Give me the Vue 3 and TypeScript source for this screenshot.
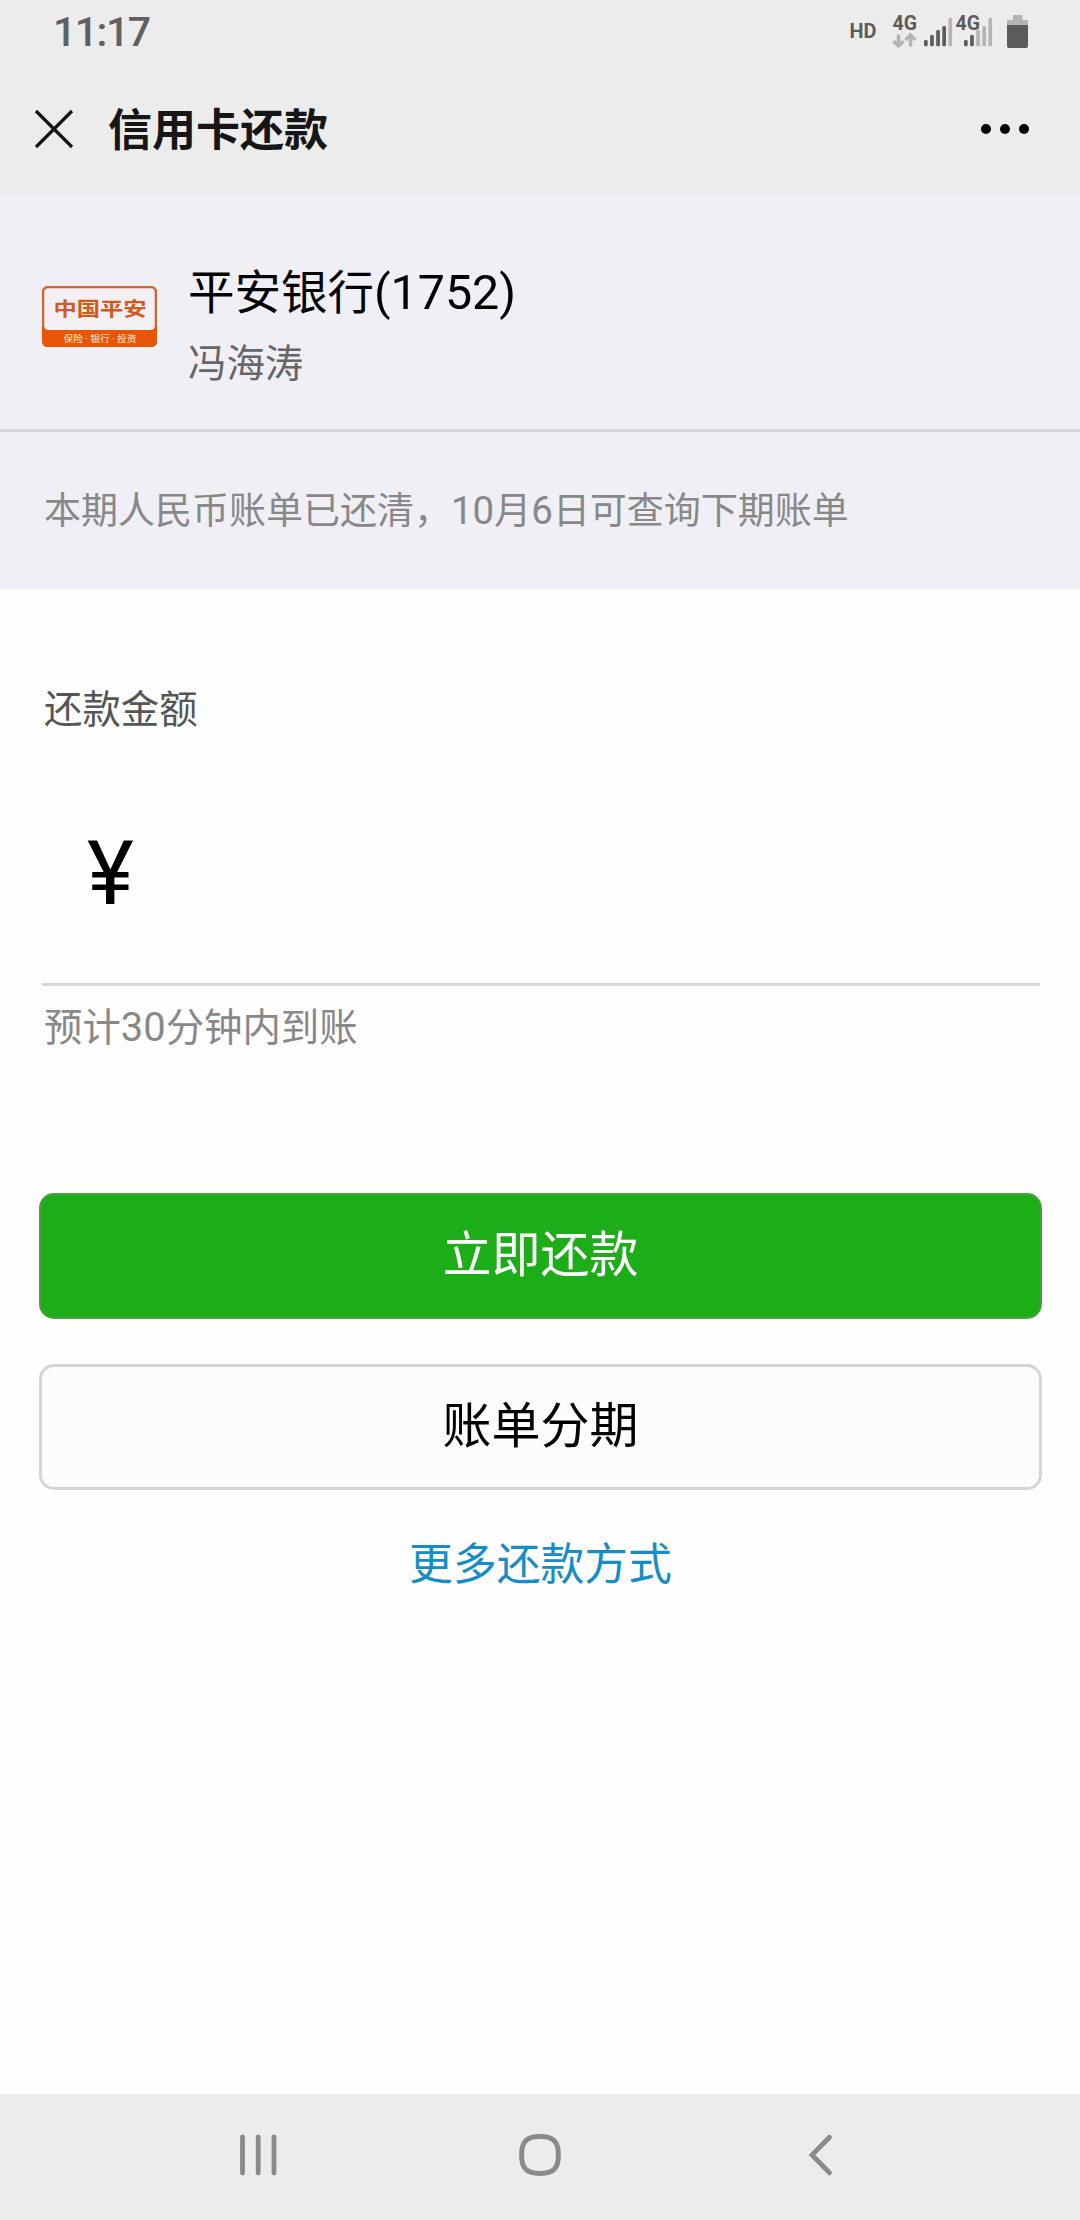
<script setup lang="ts">
interface Bar {
  x: number
  y: number
  lit: boolean
}

interface Run {
  text: string
  latin: boolean
}

const barTops = [40, 35, 30, 26, 18]

function signal(start: number, level: number): Bar[] {
  return barTops.map((y, i) => ({ x: start + i * 6.1, y, lit: i < level }))
}

const bars: Bar[] = [...signal(924, 4), ...signal(964, 2)]

// Digits are set slightly larger than the Chinese glyphs around them.
function runs(text: string): Run[] {
  return (text.match(/[\x20-\x7e]+|[^\x20-\x7e]+/g) ?? []).map((part) => ({
    text: part,
    latin: /^[\x20-\x7e]/.test(part),
  }))
}

const bank = runs('平安银行(1752)')
const notice = runs('本期人民币账单已还清，10月6日可查询下期账单')
const hint = runs('预计30分钟内到账')
</script>

<template>
  <div class="screen">
    <header class="top">
      <div class="status">
        <span class="time">11:17</span>
        <svg class="indicators" width="190" height="60" viewBox="845 0 190 60">
          <g class="tag">
            <text x="849.500" y="38.3" font-size="20.5" textLength="27" lengthAdjust="spacingAndGlyphs">HD</text>
            <text x="892.5" y="30" font-size="20" textLength="24.5" lengthAdjust="spacingAndGlyphs">4G</text>
          </g>
          <g fill="none" stroke="#b4b4b4" stroke-width="3.400">
            <path d="M898.500 34.500V46M893.500 41l5 5 5-5" />
            <path d="M910.500 46.500V35M905.500 40l5-5 5 5" />
          </g>
          <rect
            v-for="bar in bars"
            :key="bar.x"
            :x="bar.x"
            :y="bar.y"
            width="3.7"
            :height="46.3 - bar.y"
            rx="1.4"
            :fill="bar.lit ? '#5c5c5c' : '#b4b4b4'"
          />
          <g class="tag">
            <text x="955.5" y="30" font-size="20" textLength="24.5" lengthAdjust="spacingAndGlyphs">4G</text>
          </g>
          <path d="M1013 20v-4q0-1 1-1h7.500q1 0 1 1v4H1027q1 0 1 1v4.500h-21V21q0-1 1-1z" fill="#b4b4b4" />
          <path d="M1007 25h21v21q0 2-2 2h-17q-2 0-2-2z" fill="#5c5c5c" />
        </svg>
      </div>
      <div class="bar">
        <svg class="close" width="40" height="40" viewBox="0 0 40 40">
          <path d="M2 2l36 36M38 2L2 38" stroke="#161616" stroke-width="3.2" />
        </svg>
        <h1>信用卡还款</h1>
        <div class="more"><i></i><i></i><i></i></div>
      </div>
    </header>

    <section class="card">
      <svg class="logo" width="115" height="61" viewBox="0 0 115 61">
        <rect x="0" y="0" width="115" height="61" rx="6" fill="#e85503" />
        <rect x="0" y="0" width="115" height="51" rx="6" fill="#cf6435" />
        <path d="M0 40h115v15q0 6-6 6H6q-6 0-6-6z" fill="#e85503" />
        <rect x="2.3" y="2.3" width="110.400" height="41.700" rx="4" fill="#f3f0f4" />
        <text x="11.500" y="29.500" font-size="19.500" font-weight="700" fill="#d4571c" textLength="93" lengthAdjust="spacingAndGlyphs">中国平安</text>
        <text x="21.500" y="55.800" font-size="9.600" fill="#ffe9da" textLength="73" lengthAdjust="spacingAndGlyphs">保险 · 银行 · 投资</text>
      </svg>
      <div class="who">
        <div class="bank"><span v-for="(run, i) in bank" :key="i" :class="{ latin: run.latin }">{{ run.text }}</span></div>
        <div class="holder">冯海涛</div>
      </div>
    </section>
    <p class="notice"><span v-for="(run, i) in notice" :key="i" :class="{ latin: run.latin }">{{ run.text }}</span></p>

    <main class="form">
      <div class="label">还款金额</div>
      <div class="amount">¥</div>
      <div class="hint"><span v-for="(run, i) in hint" :key="i" :class="{ latin: run.latin }">{{ run.text }}</span></div>
      <button class="btn primary">立即还款</button>
      <button class="btn plain">账单分期</button>
      <a class="link">更多还款方式</a>
    </main>

    <nav class="keys">
      <svg width="40" height="46" viewBox="0 0 40 46">
        <path d="M4.500 5v36M20.200 5v36M36 5v36" stroke="#8a8a8a" stroke-width="4.8" stroke-linecap="round" />
      </svg>
      <svg class="home" width="46" height="46" viewBox="0 0 46 46">
        <path
          d="M23 4.600c13.500 0 18.400 4.900 18.400 18.400S36.500 41.400 23 41.400 4.600 36.500 4.600 23 9.500 4.600 23 4.600z"
          fill="none"
          stroke="#8a8a8a"
          stroke-width="5"
        />
      </svg>
      <svg width="30" height="46" viewBox="0 0 30 46">
        <path d="M24.500 5.200L7 23l17.500 17.800" fill="none" stroke="#8a8a8a" stroke-width="4.8" stroke-linecap="round" />
      </svg>
    </nav>
  </div>
</template>

<style>
body {
  margin: 0;
  background: #fefefe;
}
</style>

<style scoped>
.screen {
  display: flex;
  flex-direction: column;
  width: 1080px;
  height: 2220px;
  background: #fefefe;
  font-family: Roboto, "Noto Sans CJK SC", sans-serif;
  color: #000;
  overflow: hidden;
}
.latin {
  font-size: 1.04em;
  line-height: 1;
}
.top {
  height: 194px;
  background: #ececec;
}
.status {
  display: flex;
  justify-content: space-between;
  height: 64px;
  padding: 0 45px 0 53px;
}
.time {
  font-size: 41px;
  font-weight: 500;
  line-height: 65px;
  letter-spacing: -1.5px;
  color: #606060;
}
.tag {
  font-weight: 700;
  fill: #5c5c5c;
}
.bar {
  display: flex;
  align-items: center;
  height: 130px;
  padding: 0 51px 0 34px;
}
.close {
  margin-top: -1px;
}
h1 {
  flex: 1;
  margin: 3px 0 0 34px;
  font-size: 44px;
  font-weight: 700;
  line-height: 60px;
  color: #161616;
}
.more {
  display: flex;
  gap: 9px;
}
.more i {
  width: 10px;
  height: 10px;
  border-radius: 50%;
  background: #000;
}
.card {
  display: flex;
  align-items: flex-start;
  height: 235px;
  background: #f0eff5;
  border-bottom: 3px solid #d7d7da;
}
.logo {
  margin: 92px 0 0 42px;
}
.who {
  margin: 63px 0 0 31px;
}
.bank {
  font-size: 46.5px;
  line-height: 72px;
}
.holder {
  margin-top: 1px;
  font-size: 38.4px;
  line-height: 68px;
  color: #666;
}
.notice {
  height: 157px;
  margin: 0;
  padding-left: 44px;
  background: #f0eff5;
  font-size: 37px;
  line-height: 160px;
  color: #888;
}
.form {
  display: flex;
  flex: 1;
  flex-direction: column;
  padding: 0 38px 0 39px;
}
.label {
  margin: 91px 0 0 5px;
  font-size: 38.4px;
  line-height: 60px;
  color: #555;
}
.amount {
  height: 243px;
  margin: 0 2px 0 3px;
  padding-left: 45px;
  border-bottom: 3px solid #d8d8d8;
  font-size: 89px;
  line-height: 268px;
}
.hint {
  margin: 12px 0 135px 5px;
  font-size: 38.4px;
  line-height: 60px;
  color: #888;
}
.btn {
  box-sizing: border-box;
  height: 126px;
  padding: 0;
  border: 3px solid #d5d5d7;
  border-radius: 15px;
  background: #fcfcfe;
  font-family: inherit;
  font-size: 49px;
  line-height: 120px;
  color: #000;
}
.primary {
  border: 2px solid #48a03e;
  background: #1cad19;
  color: #fff;
}
.plain {
  margin-top: 45px;
}
.link {
  margin-top: 45px;
  font-size: 43.8px;
  line-height: 60px;
  text-align: center;
  color: #168dc4;
}
.keys {
  display: flex;
  align-items: center;
  height: 126px;
  padding: 0 245px 4px 237.500px;
  box-sizing: border-box;
  justify-content: space-between;
  background: #ececec;
}
.home {
  margin-right: 3px;
}
</style>
